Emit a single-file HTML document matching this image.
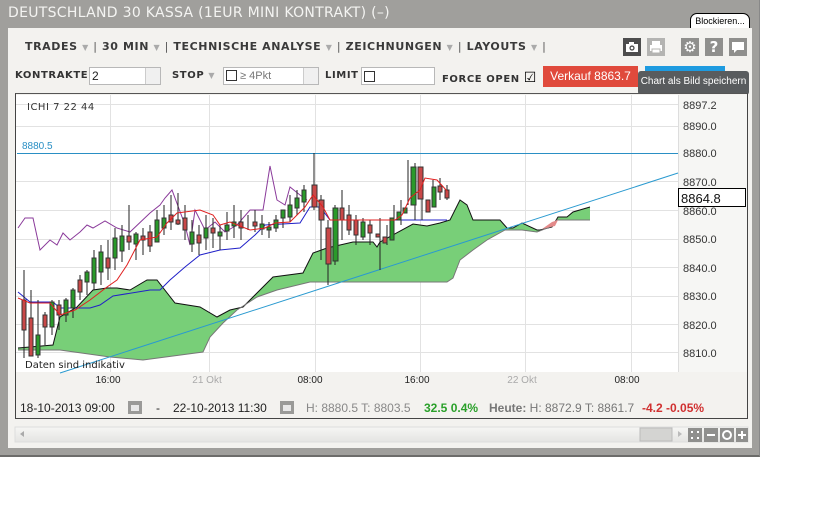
<!DOCTYPE html>
<html><head><meta charset="utf-8"><style>
*{margin:0;padding:0;box-sizing:border-box}
body{width:840px;height:525px;background:#fff;position:relative;overflow:hidden;font-family:"DejaVu Sans","Liberation Sans",sans-serif}
.abs{position:absolute}
#win{left:0;top:0;width:760px;height:457px;background:#a09f9c;border-bottom:2px solid #6c6c6a;border-right:1px solid #888}
#title{left:8px;top:5px;color:#f4f4f2;font-size:14px;letter-spacing:0.3px}
#panel{left:8px;top:28px;width:744px;height:420px;background:#f3f2ef}
.tb{font-size:11px;font-weight:bold;color:#3a3a3a;letter-spacing:0.6px;top:40px;white-space:nowrap}
.arr{color:#aaa;font-size:8px;font-weight:normal}
.sep{color:#555;font-weight:normal}
.lb{font-size:10px;font-weight:bold;color:#333;letter-spacing:0.6px;top:70px;white-space:nowrap}
.inp{background:#fff;border:1px solid #b8b8b8;height:18px;top:67px;font-family:"Liberation Sans",sans-serif;font-size:12px;color:#222;padding-left:2px;line-height:16px}
.spin{position:absolute;right:0;top:0;width:15px;height:16px;border-left:1px solid #ccc;background:#f0f0f0}
.cb{width:11px;height:11px;border:1px solid #333;background:#fff;display:inline-block}
.ic{width:18px;height:18px;top:38px;background:#8f8f8d;color:#fff;font-weight:bold;text-align:center;font-size:15px;line-height:18px}
</style></head><body>
<div id="win" class="abs"></div>
<div id="title" class="abs">DEUTSCHLAND 30 KASSA (1EUR MINI KONTRAKT) (–)</div>
<div class="abs" style="left:690px;top:13px;width:60px;height:15px;background:#fff;border:1px solid #000;border-bottom:none;border-radius:7px 7px 0 0;font-family:'Liberation Sans',sans-serif;font-size:9px;line-height:14px;text-align:center">Blockieren...</div>
<div id="panel" class="abs"></div>

<div class="abs tb" style="left:25px">TRADES <span class="arr">▼</span> <span class="sep">|</span> 30 MIN <span class="arr">▼</span> <span class="sep">|</span> TECHNISCHE ANALYSE <span class="arr">▼</span> <span class="sep">|</span> ZEICHNUNGEN <span class="arr">▼</span> <span class="sep">|</span> LAYOUTS <span class="arr">▼</span> <span class="sep">|</span></div>

<div class="abs ic" style="left:623px;background:#4d4d4d"><svg width="18" height="18"><rect x="3" y="6" width="12" height="8" fill="#fff"/><rect x="6" y="4" width="5" height="3" fill="#fff"/><circle cx="9" cy="10" r="2.6" fill="#4d4d4d"/><circle cx="9" cy="10" r="1.3" fill="#fff"/></svg></div>
<div class="abs ic" style="left:647px;background:#b4b4b2"><svg width="18" height="18"><rect x="5" y="3" width="8" height="4" fill="#fff"/><rect x="3" y="7" width="12" height="6" fill="#fff"/><rect x="5" y="11" width="8" height="4" fill="#fff" stroke="#b4b4b2"/></svg></div>
<div class="abs ic" style="left:681px">⚙</div>
<div class="abs ic" style="left:705px">?</div>
<div class="abs ic" style="left:729px"><svg width="18" height="18"><path d="M3 4h12v8H8l-3 3v-3H3z" fill="#fff"/></svg></div>

<div class="abs lb" style="left:15px">KONTRAKTE</div>
<div class="abs inp" style="left:89px;width:72px">2<div class="spin"></div></div>
<div class="abs lb" style="left:172px">STOP <span class="arr">▼</span></div>
<div class="abs inp" style="left:223px;width:96px;color:#777;font-size:11px"><span class="cb" style="vertical-align:-2px"></span> ≥ 4Pkt<div class="spin"></div></div>
<div class="abs lb" style="left:325px">LIMIT</div>
<div class="abs inp" style="left:361px;width:74px"><span class="cb" style="vertical-align:-2px"></span></div>
<div class="abs lb" style="left:442px">FORCE OPEN <span style="font-size:14px;font-weight:normal;color:#000">☑</span></div>
<div class="abs" style="left:543px;top:66px;width:95px;height:21px;background:#e04a3c;color:#fff;font-family:'Liberation Sans',sans-serif;font-size:12px;text-align:center;line-height:21px">Verkauf 8863.7</div>
<div class="abs" style="left:645px;top:66px;width:80px;height:21px;background:#1e9be0"></div>
<div class="abs" style="left:638px;top:71px;width:111px;height:24px;background:#595c5e;border-radius:3px;color:#fff;font-family:'Liberation Sans',sans-serif;font-size:10px;line-height:22px;text-align:center">Chart als Bild speichern</div>

<div class="abs" style="left:15px;top:93px;width:733px;height:326px;border:1px solid #444;border-top:1px solid #555;background:#f3f2ef"></div>
<svg class="abs" style="left:0;top:0" width="840" height="525">
<rect x="16" y="95" width="662" height="277" fill="#fff"/>
<g stroke="#e2e2e2" stroke-width="1">
<line x1="16" y1="104.5" x2="678" y2="104.5"/><line x1="16" y1="126.5" x2="678" y2="126.5"/><line x1="16" y1="181.5" x2="678" y2="181.5"/><line x1="16" y1="210.5" x2="678" y2="210.5"/><line x1="16" y1="239.5" x2="678" y2="239.5"/><line x1="16" y1="267.5" x2="678" y2="267.5"/><line x1="16" y1="296.5" x2="678" y2="296.5"/><line x1="16" y1="324.5" x2="678" y2="324.5"/><line x1="16" y1="352.5" x2="678" y2="352.5"/>
<line x1="110.5" y1="95" x2="110.5" y2="372"/><line x1="209.5" y1="95" x2="209.5" y2="372"/><line x1="315.5" y1="95" x2="315.5" y2="372"/><line x1="420.5" y1="95" x2="420.5" y2="372"/><line x1="525.5" y1="95" x2="525.5" y2="372"/><line x1="631.5" y1="95" x2="631.5" y2="372"/>
</g>
<rect x="678" y="95" width="69" height="277" fill="#f6f6f4"/>
<line x1="678.5" y1="95" x2="678.5" y2="372" stroke="#ddd"/>
<polygon fill="#78cf78" points="18,348 53,345 60,317 77,307 93,290 107,288 117,288 130,290 147,280 157,280 175,303 200,307 217,317 230,310 243,307 273,277 303,273 313,253 327,248 353,242 373,242 377,247 380,242 413,224 427,226 440,223 450,220 460,200 467,205 473,220 500,220 507,228 513,228 522,223 537,230 540,230 552,227 558,217 567,217 573,212 590,207 590,220 557,220 550,227 537,232 522,230 505,230 487,240 473,250 460,260 453,278 447,282 340,282 310,282 277,290 257,297 237,310 223,323 210,337 203,352 143,360 110,357 60,350 18,350"/>
<polyline fill="none" stroke="#111" stroke-width="1" points="18,348 53,345 60,317 77,307 93,290 107,288 117,288 130,290 147,280 157,280 175,303 200,307 217,317 230,310 243,307 273,277 303,273 313,253 327,248 353,242 373,242 377,247 380,242 413,224 427,226 440,223 450,220 460,200 467,205 473,220 500,220 507,228 513,228 522,223 537,230 540,230 552,227 558,217 567,217 573,212 590,207"/>
<polyline fill="none" stroke="#777" stroke-width="1" points="590,220 557,220 550,227 537,232 522,230 505,230 487,240 473,250 460,260 453,278 447,282 340,282 310,282 277,290 257,297 237,310 223,323 210,337 203,352 143,360 110,357 60,350 18,350"/>
<line x1="17" y1="153.5" x2="678" y2="153.5" stroke="#2a8fc4"/>
<line x1="60" y1="373" x2="678" y2="173" stroke="#2a9ad0"/>
<polyline fill="none" stroke="#8a3a9a" stroke-width="1" points="18,228 25,218 33,218 40,250 50,240 57,245 63,233 70,240 80,232 87,225 93,228 105,221 117,228 130,232 150,213 160,205 165,198 172,190 185,225 190,245 195,210 205,230 215,222 225,232 237,225 250,210 263,210 270,166 277,200 285,205 290,187 300,195 307,200"/>
<polyline fill="none" stroke="#2020c8" stroke-width="1" points="18,292 30,302 53,302 60,308 90,308 100,305 113,296 150,290 160,290 170,280 185,267 200,255 220,250 240,248 255,235 265,225 300,223 310,207 320,207 330,220 390,220 447,220"/>
<g stroke="#222" stroke-width="1">
<line x1="24" y1="270" x2="24" y2="358"/><line x1="31" y1="290" x2="31" y2="356"/><line x1="38" y1="300" x2="38" y2="358"/><line x1="45" y1="312" x2="45" y2="345"/><line x1="52" y1="300" x2="52" y2="335"/><line x1="59" y1="300" x2="59" y2="330"/><line x1="66" y1="298" x2="66" y2="322"/><line x1="73" y1="288" x2="73" y2="318"/><line x1="80" y1="275" x2="80" y2="300"/><line x1="87" y1="270" x2="87" y2="295"/><line x1="94" y1="250" x2="94" y2="290"/><line x1="101" y1="245" x2="101" y2="285"/><line x1="108" y1="240" x2="108" y2="280"/><line x1="115" y1="228" x2="115" y2="270"/><line x1="122" y1="225" x2="122" y2="262"/><line x1="129" y1="205" x2="129" y2="250"/><line x1="136" y1="232" x2="136" y2="260"/><line x1="143" y1="228" x2="143" y2="255"/><line x1="150" y1="225" x2="150" y2="252"/><line x1="157" y1="210" x2="157" y2="240"/><line x1="164" y1="205" x2="164" y2="235"/><line x1="171" y1="195" x2="171" y2="230"/><line x1="178" y1="193" x2="178" y2="225"/><line x1="185" y1="205" x2="185" y2="240"/><line x1="192" y1="220" x2="192" y2="252"/><line x1="199" y1="225" x2="199" y2="255"/><line x1="206" y1="215" x2="206" y2="250"/><line x1="213" y1="218" x2="213" y2="248"/><line x1="220" y1="225" x2="220" y2="250"/><line x1="227" y1="212" x2="227" y2="240"/><line x1="234" y1="205" x2="234" y2="238"/><line x1="241" y1="210" x2="241" y2="240"/><line x1="248" y1="215" x2="248" y2="230"/><line x1="255" y1="210" x2="255" y2="232"/><line x1="262" y1="215" x2="262" y2="235"/><line x1="269" y1="222" x2="269" y2="238"/><line x1="276" y1="215" x2="276" y2="232"/><line x1="283" y1="210" x2="283" y2="228"/><line x1="290" y1="195" x2="290" y2="222"/><line x1="297" y1="190" x2="297" y2="215"/><line x1="304" y1="185" x2="304" y2="212"/><line x1="314" y1="153" x2="314" y2="210"/><line x1="321" y1="195" x2="321" y2="260"/><line x1="328" y1="220" x2="328" y2="285"/><line x1="335" y1="205" x2="335" y2="265"/><line x1="342" y1="190" x2="342" y2="240"/><line x1="349" y1="205" x2="349" y2="235"/><line x1="356" y1="215" x2="356" y2="245"/><line x1="363" y1="218" x2="363" y2="240"/><line x1="370" y1="220" x2="370" y2="245"/><line x1="380" y1="218" x2="380" y2="270"/><line x1="387" y1="225" x2="387" y2="245"/><line x1="394" y1="205" x2="394" y2="238"/><line x1="401" y1="200" x2="401" y2="225"/><line x1="408" y1="160" x2="408" y2="205"/><line x1="415" y1="163" x2="415" y2="220"/><line x1="422" y1="185" x2="422" y2="220"/><line x1="433" y1="180" x2="433" y2="205"/><line x1="440" y1="178" x2="440" y2="200"/><line x1="447" y1="185" x2="447" y2="200"/>
</g>
<g stroke="#333" stroke-width="1">
<rect x="22" y="300" width="4" height="30" fill="#c94848"/><rect x="29" y="318" width="4" height="38" fill="#c94848"/><rect x="36" y="335" width="4" height="20" fill="#2a9a2a"/><rect x="43" y="315" width="4" height="12" fill="#c94848"/><rect x="50" y="302" width="4" height="25" fill="#2a9a2a"/><rect x="57" y="305" width="4" height="10" fill="#c94848"/><rect x="64" y="300" width="4" height="15" fill="#2a9a2a"/><rect x="71" y="290" width="4" height="18" fill="#2a9a2a"/><rect x="78" y="280" width="4" height="12" fill="#c94848"/><rect x="85" y="272" width="4" height="10" fill="#2a9a2a"/><rect x="92" y="258" width="4" height="25" fill="#2a9a2a"/><rect x="99" y="252" width="4" height="20" fill="#2a9a2a"/><rect x="106" y="258" width="4" height="10" fill="#c94848"/><rect x="113" y="238" width="4" height="20" fill="#2a9a2a"/><rect x="120" y="236" width="4" height="15" fill="#2a9a2a"/><rect x="127" y="236" width="4" height="6" fill="#c94848"/><rect x="134" y="234" width="4" height="10" fill="#2a9a2a"/><rect x="141" y="236" width="4" height="4" fill="#c94848"/><rect x="148" y="232" width="4" height="14" fill="#c94848"/><rect x="155" y="220" width="4" height="22" fill="#2a9a2a"/><rect x="162" y="218" width="4" height="10" fill="#2a9a2a"/><rect x="169" y="215" width="4" height="7" fill="#c94848"/><rect x="176" y="220" width="4" height="4" fill="#c94848"/><rect x="183" y="218" width="4" height="12" fill="#c94848"/><rect x="190" y="232" width="4" height="12" fill="#2a9a2a"/><rect x="197" y="235" width="4" height="8" fill="#c94848"/><rect x="204" y="228" width="4" height="10" fill="#2a9a2a"/><rect x="211" y="228" width="4" height="5" fill="#c94848"/><rect x="218" y="232" width="4" height="4" fill="#2a9a2a"/><rect x="225" y="225" width="4" height="6" fill="#2a9a2a"/><rect x="232" y="222" width="4" height="4" fill="#2a9a2a"/><rect x="239" y="222" width="4" height="6" fill="#c94848"/><rect x="253" y="222" width="4" height="4" fill="#c94848"/><rect x="260" y="224" width="4" height="5" fill="#2a9a2a"/><rect x="267" y="227" width="4" height="3" fill="#2a9a2a"/><rect x="274" y="220" width="4" height="8" fill="#2a9a2a"/><rect x="281" y="210" width="4" height="8" fill="#2a9a2a"/><rect x="288" y="205" width="4" height="12" fill="#2a9a2a"/><rect x="295" y="198" width="4" height="10" fill="#2a9a2a"/><rect x="302" y="190" width="4" height="12" fill="#2a9a2a"/><rect x="312" y="185" width="5" height="22" fill="#c94848"/><rect x="319" y="200" width="5" height="20" fill="#c94848"/><rect x="326" y="228" width="5" height="36" fill="#c94848"/><rect x="333" y="208" width="5" height="53" fill="#2a9a2a"/><rect x="340" y="208" width="4" height="12" fill="#c94848"/><rect x="347" y="215" width="4" height="15" fill="#c94848"/><rect x="354" y="220" width="4" height="15" fill="#c94848"/><rect x="361" y="222" width="4" height="15" fill="#2a9a2a"/><rect x="368" y="225" width="4" height="8" fill="#c94848"/><rect x="376" y="234" width="4" height="3" fill="#c94848"/><rect x="383" y="237" width="4" height="6" fill="#c94848"/><rect x="390" y="218" width="4" height="22" fill="#2a9a2a"/><rect x="397" y="212" width="4" height="8" fill="#2a9a2a"/><rect x="403" y="208" width="4" height="5" fill="#2a9a2a"/><rect x="411" y="167" width="5" height="38" fill="#2a9a2a"/><rect x="418" y="167" width="5" height="32" fill="#c94848"/><rect x="426" y="200" width="4" height="12" fill="#c94848"/><rect x="432" y="187" width="4" height="20" fill="#2a9a2a"/><rect x="438" y="186" width="4" height="6" fill="#c94848"/><rect x="445" y="190" width="4" height="8" fill="#c94848"/>
</g>
<polyline fill="none" stroke="#e02020" stroke-width="1" points="18,298 30,303 50,303 60,315 75,310 90,300 107,287 117,280 127,265 140,240 157,237 167,223 177,213 200,210 213,215 220,225 230,222 250,230 265,228 275,223 290,222 305,207 313,195 323,207 330,220 360,220 395,220 402,215 410,198 420,190 425,178 437,180 447,191"/>
<polygon points="542,229 552,222 558,220 555,226" fill="#e38a8a"/>
<text x="27" y="110" font-family="DejaVu Sans,sans-serif" font-size="10" fill="#333" letter-spacing="0.5">ICHI  7  22  44</text>
<text x="22" y="149" font-family="Liberation Sans,sans-serif" font-size="10" fill="#2a8fc4">8880.5</text>
<text x="25" y="368" font-family="DejaVu Sans,sans-serif" font-size="10" fill="#222">Daten sind indikativ</text>
<g font-family="Liberation Sans,sans-serif" font-size="11" fill="#333">
<text x="683" y="109">8897.2</text><text x="683" y="130">8890.0</text><text x="683" y="157">8880.0</text><text x="683" y="186">8870.0</text><text x="683" y="215">8860.0</text><text x="683" y="243">8850.0</text><text x="683" y="272">8840.0</text><text x="683" y="300">8830.0</text><text x="683" y="329">8820.0</text><text x="683" y="357">8810.0</text>
</g>
<rect x="678.5" y="188.5" width="67" height="18" fill="#fff" stroke="#000"/>
<text x="681" y="203" font-family="Liberation Sans,sans-serif" font-size="13" fill="#111">8864.8</text>
<g font-family="Liberation Sans,sans-serif" font-size="10" fill="#222" text-anchor="middle">
<text x="108" y="383">16:00</text><text x="207" y="383" fill="#aaa">21 Okt</text><text x="310" y="383">08:00</text><text x="417" y="383">16:00</text><text x="522" y="383" fill="#aaa">22 Okt</text><text x="627" y="383">08:00</text>
</g>
<g font-family="Liberation Sans,sans-serif" font-size="12">
<text x="20" y="412" fill="#222">18-10-2013 09:00</text>
<rect x="128" y="401" width="14" height="13" fill="#9a9a98"/><rect x="131" y="405" width="8" height="6" fill="#e8e8e8"/>
<text x="156" y="412" fill="#222">-</text>
<text x="173" y="412" fill="#222">22-10-2013 11:30</text>
<rect x="280" y="401" width="14" height="13" fill="#9a9a98"/><rect x="283" y="405" width="8" height="6" fill="#e8e8e8"/>
<text x="306" y="412" fill="#888">H: 8880.5  T: 8803.5</text>
<text x="424" y="412" fill="#2aa02a" font-weight="bold">32.5  0.4%</text>
<text x="489" y="412" fill="#777"><tspan font-weight="bold">Heute:</tspan> H: 8872.9  T: 8861.7</text>
<text x="642" y="412" fill="#d03030" font-weight="bold">-4.2  -0.05%</text>
</g>
<defs><linearGradient id="sg" x1="0" y1="0" x2="0" y2="1"><stop offset="0" stop-color="#f6f6f4"/><stop offset="1" stop-color="#e4e4e2"/></linearGradient></defs>
<rect x="15" y="427" width="733" height="15" fill="url(#sg)" stroke="#ddd"/>
<polygon points="20,434 24,431 24,437" fill="#aaa"/>
<rect x="640" y="428" width="32" height="13" fill="#d4d4d2" stroke="#bbb"/>
<polygon points="678,431 682,434 678,437" fill="#bbb"/>
<rect x="688" y="428" width="14" height="14" fill="#8f8f8d"/><rect x="704" y="428" width="14" height="14" fill="#8f8f8d"/><rect x="720" y="428" width="14" height="14" fill="#8f8f8d"/><rect x="736" y="428" width="12" height="14" fill="#8f8f8d"/>
<rect x="707" y="434" width="8" height="2" fill="#fff"/><circle cx="727" cy="435" r="4" fill="none" stroke="#fff" stroke-width="2"/><rect x="738" y="434" width="8" height="2" fill="#fff"/><rect x="741" y="431" width="2" height="8" fill="#fff"/>
<g fill="#fff"><rect x="691" y="431" width="2" height="2"/><rect x="697" y="431" width="2" height="2"/><rect x="691" y="437" width="2" height="2"/><rect x="697" y="437" width="2" height="2"/></g>
</svg>
</body></html>
